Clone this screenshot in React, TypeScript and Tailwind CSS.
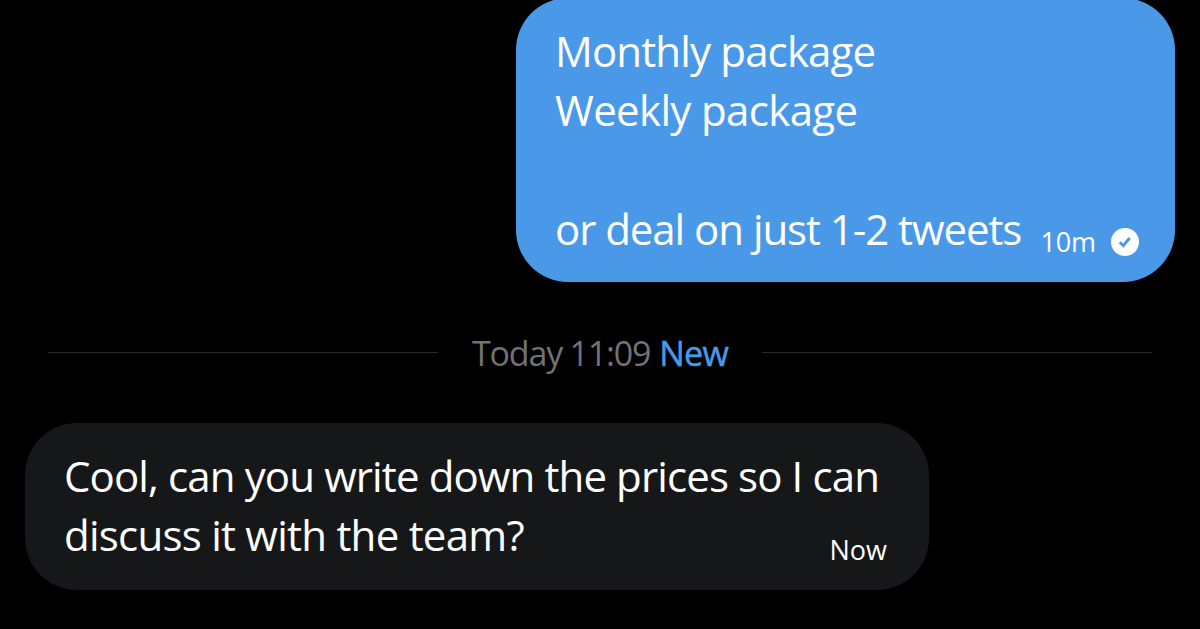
import React from 'react';

function SentIcon() {
  return (
    <svg className="h-7 w-7 shrink-0" viewBox="0 0 28 28" fill="none" aria-hidden="true">
      <circle cx="14" cy="14" r="14" fill="#fff" />
      <path d="M8.8 14.2 12.3 17.7 18.7 10" stroke="#4a99e9" strokeWidth="2.9" />
    </svg>
  );
}

export default function App() {
  return (
    <main className="flex h-[629px] w-[1200px] flex-col overflow-hidden bg-black font-['Open_Sans',sans-serif] text-[42px] leading-[59px] whitespace-nowrap text-white">
      <section className="-mt-0.5 mr-[25px] flex h-[284px] w-[659px] shrink-0 flex-col self-end rounded-[52px] bg-[#4a99e9] pt-[23px] pr-9 pl-[39px]">
        <p className="tracking-[-0.85px]">Monthly package</p>
        <p className="tracking-[-0.65px]">Weekly package</p>
        <div className="h-[60px]" />
        <div className="flex">
          <p className="tracking-[-1.1px] [word-spacing:0.2px]">or deal on just 1-2 tweets</p>
          <div className="ml-auto flex h-[59px] items-center gap-[15px] pt-[26px]">
            <span className="text-[27px] leading-7 tracking-[-0.1px]">10m</span>
            <SentIcon />
          </div>
        </div>
      </section>

      <div className="flex h-[141px] shrink-0 items-center px-12">
        <div className="h-px w-[390px] bg-[#2a2b2d]" />
        <p className="flex flex-1 justify-center gap-[9px] text-[34px] leading-10 tracking-[-1.2px] text-[#717276]">
          <span>Today 11:09</span>
          <span className="font-medium tracking-[-0.8px] text-[#4a99e9] [-webkit-text-stroke:0.5px_#4a99e9]">New</span>
        </p>
        <div className="h-px w-[390px] bg-[#2a2b2d]" />
      </div>

      <section className="ml-[25px] flex h-[167px] w-[904px] shrink-0 flex-col rounded-[52px] bg-[#161719] pt-[23px] pr-[42px] pl-[39px]">
        <p className="tracking-[-0.88px]">Cool, can you write down the prices so I can</p>
        <div className="flex">
          <p className="tracking-[-0.75px]">discuss it with the team?</p>
          <span className="ml-auto pt-[31px] text-[27px] leading-7">Now</span>
        </div>
      </section>
    </main>
  );
}
